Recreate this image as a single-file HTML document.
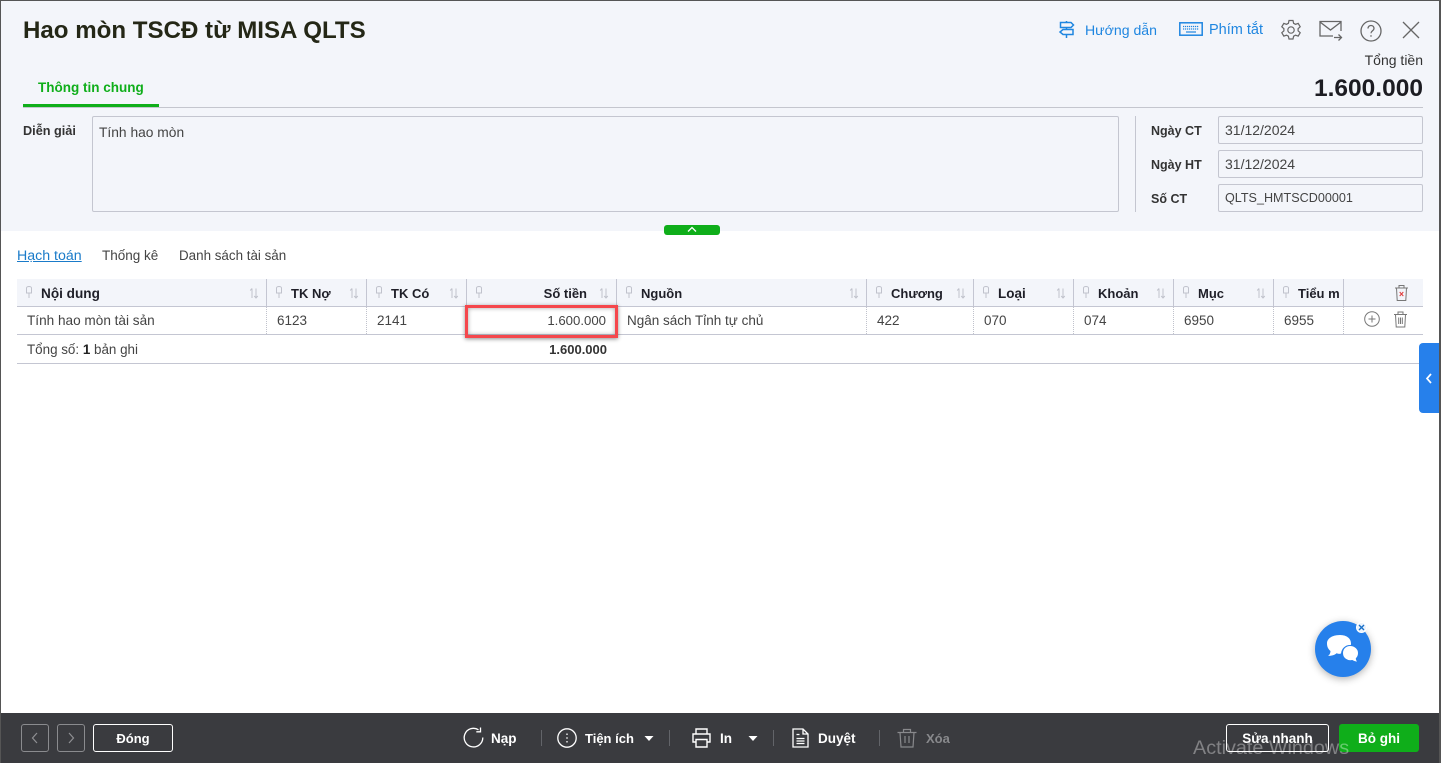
<!DOCTYPE html>
<html lang="vi"><head><meta charset="utf-8"><title>Hao mòn TSCĐ từ MISA QLTS</title>
<style>
html,body{margin:0;padding:0;width:1441px;height:763px;overflow:hidden;background:#fff}
body{position:relative;font-family:"Liberation Sans","Noto Sans CJK JP",sans-serif;font-size:13px;color:#444}
.a,.t,svg{position:absolute}
.t{white-space:nowrap;line-height:18px}
.b{font-weight:bold;color:#1f1f28}
.h{font-weight:bold;color:#1f1f28;top:285px;font-size:13px}
.c{top:312px;color:#444;font-size:13.500px}
.s{top:279px;width:1px;height:27px;background:#c4c6d2}
.d{top:307px;height:27px;border-left:1px dotted #c0c2cc}
.inp{box-sizing:border-box;border:1px solid #c4c6d0;border-radius:2px;background:#f3f5fa;left:1218px;width:205px;height:28px}
.w{color:#fff;font-weight:bold;font-size:13.500px}
.sep{width:1px;height:16px;background:#626469;top:730px}
</style></head><body>
<div class="a" style="left:0;top:0;width:1441px;height:231px;background:#f3f5fa"></div>
<div class="t" style="left:23px;top:15px;font-size:24.100px;line-height:32px;font-weight:bold;color:#242716">Hao mòn TSCĐ từ MISA QLTS</div>

<svg style="left:1057px;top:20px" width="20" height="20" viewBox="0 0 20 20" fill="none" stroke="#1f86e0" stroke-width="1.500"><path d="M3.500 2.500H14L16.500 5 14 7.500H3.500zM16 9.500H6L3 12l3 2.500H16zM9.500 7.500v2M9.500 14.500V18M9.500 1V2.500"/></svg>
<div class="t" style="left:1085px;top:21px;color:#1f86e0;font-size:14.100px">Hướng dẫn</div>
<svg style="left:1179px;top:22px" width="24" height="15" viewBox="0 0 24 15" fill="none" stroke="#1f86e0"><rect x=".8" y=".8" width="22.400" height="12.400" stroke-width="1.500"/><path d="M4 4.500h16M4 7h16" stroke-width="1.200" stroke-dasharray="1.200 .8"/><path d="M7 10h10" stroke-width="1.200"/></svg>
<div class="t" style="left:1209px;top:21px;color:#1f86e0;font-size:14.500px">Phím tắt</div>
<svg style="left:1280px;top:19px" width="22" height="22" viewBox="0 0 22 22" fill="none" stroke="#666" stroke-width="1.200"><path d="M9 1.500h4l.6 2.800 1.900 1 2.700-.9 2 3.400-2.100 1.900v2.100l2.100 1.900-2 3.400-2.700-.9-1.900 1-.6 2.800H9l-.6-2.800-1.900-1-2.700.9-2-3.400 2.100-1.900V9.700L1.800 7.800l2-3.400 2.700.9 1.900-1z"/><circle cx="11" cy="11" r="3.200"/></svg>
<svg style="left:1319px;top:20px" width="24" height="22" viewBox="0 0 24 22" fill="none" stroke="#666" stroke-width="1.300"><path d="M14 16H1V1.500h21V11M1 2l10.500 8L22 2M15 17.500h7.500M19.500 14.500l3 3-3 3"/></svg>
<svg style="left:1360px;top:20px" width="22" height="22" viewBox="0 0 22 22" fill="none" stroke="#666" stroke-width="1.300"><circle cx="11" cy="11" r="10"/><path d="M8 8.500c0-4 6-4 6 0 0 2.200-3 2.300-3 4.700"/><path d="M11 15.200v1.500"/></svg>
<svg style="left:1402px;top:21px" width="18" height="18" viewBox="0 0 18 18" stroke="#666" stroke-width="1.300"><path d="M1 1l16 16M17 1L1 17"/></svg>

<div class="t" style="right:18px;top:51px;font-size:14px;color:#333">Tổng tiền</div>
<div class="t" style="right:18px;top:74px;font-size:24.500px;line-height:30px;font-weight:bold;color:#1c1c22">1.600.000</div>

<div class="t" style="left:38px;top:79px;color:#0fae1a;font-weight:bold;font-size:13.500px">Thông tin chung</div>
<div class="a" style="left:23px;top:107px;width:1400px;height:1px;background:#c4c6ce"></div>
<div class="a" style="left:23px;top:104px;width:136px;height:3px;background:#0fae1a"></div>

<div class="t b" style="left:23px;top:122px;font-size:12.700px;color:#333">Diễn giải</div>
<div class="a" style="box-sizing:border-box;left:92px;top:116px;width:1027px;height:96px;border:1px solid #c4c6d0;border-radius:2px"></div>
<div class="t" style="left:99px;top:124px;font-size:13.800px">Tính hao mòn</div>
<div class="a" style="left:1135px;top:116px;width:1px;height:96px;background:#c4c6d0"></div>
<div class="t b" style="left:1151px;top:122px;font-size:12.500px;color:#333">Ngày CT</div>
<div class="t b" style="left:1151px;top:156px;font-size:12.500px;color:#333">Ngày HT</div>
<div class="t b" style="left:1151px;top:190px;font-size:12.500px;color:#333">Số CT</div>
<div class="a inp" style="top:116px"></div><div class="a inp" style="top:150px"></div><div class="a inp" style="top:184px"></div>
<div class="t" style="left:1225px;top:121px;font-size:14px">31/12/2024</div>
<div class="t" style="left:1225px;top:155px;font-size:14px">31/12/2024</div>
<div class="t" style="left:1225px;top:189px;font-size:12.600px">QLTS_HMTSCD00001</div>

<div class="a" style="left:664px;top:225px;width:56px;height:10px;border-radius:3px;background:#0fae1a"></div>
<svg style="left:687px;top:226px" width="10" height="7" viewBox="0 0 10 7" fill="none" stroke="#fff" stroke-width="1.300"><path d="M1 5.500l4-4 4 4"/></svg>

<div class="t" style="left:17px;top:247px;color:#1a7bc9;text-decoration:underline;font-size:14.200px">Hạch toán</div>
<div class="t" style="left:102px;top:247px;font-size:13.500px">Thống kê</div>
<div class="t" style="left:179px;top:247px;font-size:13.400px">Danh sách tài sản</div>

<div class="a" style="left:17px;top:279px;width:1406px;height:27px;background:#f3f5fa"></div>
<div class="a" style="left:17px;top:306px;width:1406px;height:1px;background:#c4c6d2"></div>
<div class="a" style="left:17px;top:334px;width:1406px;height:1px;background:#c4c6d2"></div>
<div class="a" style="left:17px;top:363px;width:1406px;height:1px;background:#c4c6d2"></div>

<div class="a s" style="left:266px"></div><div class="a s" style="left:366px"></div><div class="a s" style="left:466px"></div><div class="a s" style="left:616px"></div><div class="a s" style="left:866px"></div><div class="a s" style="left:973px"></div><div class="a s" style="left:1073px"></div><div class="a s" style="left:1173px"></div><div class="a s" style="left:1273px"></div><div class="a s" style="left:1343px"></div>
<div class="a d" style="left:266px"></div><div class="a d" style="left:366px"></div><div class="a d" style="left:866px"></div><div class="a d" style="left:973px"></div><div class="a d" style="left:1073px"></div><div class="a d" style="left:1173px"></div><div class="a d" style="left:1273px"></div><div class="a d" style="left:1343px"></div>

<svg class="a" style="left:0;top:279px" width="1441" height="27" fill="none" stroke="#c0c2cc" stroke-width="1">
<defs><g id="p"><path d="M-2.500 9a2.500 1.500 0 0 1 5 0v5h-5zM0 14v5"/></g>
<g id="o"><path d="M-2 19V9.500M-3.800 11.500L-2 9.500M2 9.500V19M.2 17L2 19l1.800-2"/></g></defs>
<use href="#p" x="29"/><use href="#p" x="279"/><use href="#p" x="379"/><use href="#p" x="479"/><use href="#p" x="629"/><use href="#p" x="879"/><use href="#p" x="986"/><use href="#p" x="1086"/><use href="#p" x="1186"/><use href="#p" x="1286"/>
<use href="#o" x="254"/><use href="#o" x="354"/><use href="#o" x="454"/><use href="#o" x="604"/><use href="#o" x="854"/><use href="#o" x="961"/><use href="#o" x="1061"/><use href="#o" x="1161"/><use href="#o" x="1261"/>
</svg>

<div class="t h" style="left:41px;font-size:13.600px">Nội dung</div>
<div class="t h" style="left:291px">TK Nợ</div>
<div class="t h" style="left:391px">TK Có</div>
<div class="t h" style="right:854px">Số tiền</div>
<div class="t h" style="left:641px">Nguồn</div>
<div class="t h" style="left:891px">Chương</div>
<div class="t h" style="left:998px;font-size:13.500px">Loại</div>
<div class="t h" style="left:1098px">Khoản</div>
<div class="t h" style="left:1198px">Mục</div>
<div class="a" style="left:1298px;top:285px;width:42px;height:18px;overflow:hidden"><div class="t h" style="left:0;top:0">Tiểu mục</div></div>

<div class="t c" style="left:27px;font-size:13.600px">Tính hao mòn tài sản</div>
<div class="t c" style="left:277px">6123</div>
<div class="t c" style="left:377px">2141</div>
<div class="t c" style="right:835px;font-size:13.200px">1.600.000</div>
<div class="t c" style="left:627px">Ngân sách Tỉnh tự chủ</div>
<div class="t c" style="left:877px">422</div>
<div class="t c" style="left:984px">070</div>
<div class="t c" style="left:1084px">074</div>
<div class="t c" style="left:1184px">6950</div>
<div class="t c" style="left:1284px">6955</div>

<svg style="left:1394px;top:284px" width="15" height="18" viewBox="0 0 15 18" fill="none" stroke="#777" stroke-width="1"><path d="M1 4h13M5 4V1.500h5V4M2.500 4l.7 12.500h8.600L12.500 4"/><path d="M5.700 8l3.600 4M9.300 8l-3.600 4" stroke="#e03a3a"/></svg>
<svg style="left:1364px;top:311px" width="16" height="16" viewBox="0 0 16 16" fill="none" stroke="#777" stroke-width="1"><circle cx="8" cy="8" r="7.300"/><path d="M4.500 8h7M8 4.500v7"/></svg>
<svg style="left:1393px;top:311px" width="15" height="17" viewBox="0 0 15 17" fill="none" stroke="#777" stroke-width="1"><path d="M1 3.500h13M5 3.500V1h5v2.500M2.500 3.500l.7 12.500h8.600l.7-12.500M5.700 6.500v6.500M7.500 6.500v6.500M9.300 6.500v6.500"/></svg>

<div class="a" style="box-sizing:border-box;left:465px;top:305px;width:153px;height:33px;border:3px solid #f5474c;box-shadow:0 1px 4px rgba(0,0,0,.45),inset 0 0 5px rgba(0,0,0,.35)"></div>

<div class="t" style="left:27px;top:341px;font-size:13.400px">Tổng số: <b style="color:#222">1</b> bản ghi</div>
<div class="t b" style="right:834px;top:341px;color:#333">1.600.000</div>

<div class="a" style="left:1419px;top:343px;width:21px;height:70px;background:#2680eb;border-radius:4px 0 0 4px"></div>
<svg style="left:1425px;top:373px" width="8" height="11" viewBox="0 0 8 11" fill="none" stroke="#fff" stroke-width="1.700"><path d="M6 1L2 5.500 6 10"/></svg>

<div class="a" style="left:1315px;top:621px;width:56px;height:56px;border-radius:50%;background:#2680eb;box-shadow:0 2px 8px rgba(0,0,0,.3)"></div>
<svg style="left:1326px;top:633px" width="34" height="32" viewBox="0 0 34 32" fill="#fff"><path d="M14 2c6 0 11 3 11 8.500 0 1-.2 1.500-.3 2-4-1-9 2-9.700 8-1.500.5-3 .4-4.500-.2C9 22 5.500 23 2 23c1.500-1 2.500-3 2.500-5C2 16 1 13.500 1 10.500 1 5 7 2 14 2z"/><path d="M24 12.500c5 0 8.500 3.500 8.500 7.500 0 2.500-1 4.300-2.200 5.500 0 1.500.7 2.500 2 3.500-2.500 0-4.500-.6-6-1.500-5 1-9.800-2-9.800-7.500 0-4.500 3.500-7.500 7.500-7.500z" stroke="#2680eb" stroke-width="1"/></svg>
<div class="a" style="box-sizing:border-box;left:1356px;top:622px;width:11px;height:11px;border-radius:50%;background:#eaf2fc;border:1px solid #fff"></div>
<svg style="left:1358px;top:624px" width="7" height="7" viewBox="0 0 7 7" stroke="#1a70c8" stroke-width="1.400"><path d="M1 1l5 5M6 1L1 6"/></svg>

<div class="a" style="left:0;top:713px;width:1441px;height:50px;background:#3a3b3f"></div>
<div class="a" style="left:0;top:0;width:1441px;height:1px;background:#555"></div>
<div class="a" style="left:0;top:0;width:1px;height:763px;background:#555"></div>
<div class="a" style="left:1439px;top:0;width:2px;height:763px;background:#555"></div>

<div class="a" style="box-sizing:border-box;left:21px;top:724px;width:28px;height:28px;border:1px solid #8a8b8e;border-radius:3px"></div>
<svg style="left:31px;top:732px" width="8" height="12" viewBox="0 0 8 12" fill="none" stroke="#8f9093" stroke-width="1.200"><path d="M6 1L1.500 6 6 11"/></svg>
<div class="a" style="box-sizing:border-box;left:57px;top:724px;width:28px;height:28px;border:1px solid #8a8b8e;border-radius:3px"></div>
<svg style="left:67px;top:732px" width="8" height="12" viewBox="0 0 8 12" fill="none" stroke="#8f9093" stroke-width="1.200"><path d="M2 1l4.500 5L2 11"/></svg>
<div class="a" style="box-sizing:border-box;left:93px;top:724px;width:80px;height:28px;border:1px solid #fff;border-radius:3px"></div>
<div class="t w" style="left:93px;width:80px;text-align:center;top:730px;font-size:13px">Đóng</div>

<svg style="left:463px;top:727px" width="21" height="21" viewBox="0 0 21 21" fill="none" stroke="#fff" stroke-width="1.300"><path d="M15.500 2.800A9.300 9.300 0 1 0 19.800 10.500"/><path d="M16.500 .5v4.300h-4.200" transform="translate(1 0)"/></svg>
<div class="t w" style="left:491px;top:730px">Nạp</div>
<div class="a sep" style="left:541px"></div>
<svg style="left:557px;top:728px" width="20" height="20" viewBox="0 0 20 20" fill="none" stroke="#fff" stroke-width="1.300"><circle cx="10" cy="10" r="9.200"/><path d="M10 5.500v1.500M10 9.200v1.500M10 13v1.500"/></svg>
<div class="t w" style="left:585px;top:730px;font-size:13px">Tiện ích</div>
<svg style="left:644px;top:736px" width="10" height="5" viewBox="0 0 10 5" fill="#fff"><path d="M.5 0h9L5 5z"/></svg>
<div class="a sep" style="left:669px"></div>
<svg style="left:692px;top:728px" width="19" height="20" viewBox="0 0 19 20" fill="none" stroke="#fff" stroke-width="1.400"><path d="M4 6V1h11v5M4 14H1V6h17v8h-3M4 11.500h11V19H4z"/></svg>
<div class="t w" style="left:720px;top:730px">In</div>
<svg style="left:748px;top:736px" width="10" height="5" viewBox="0 0 10 5" fill="#fff"><path d="M.5 0h9L5 5z"/></svg>
<div class="a sep" style="left:773px"></div>
<svg style="left:792px;top:728px" width="17" height="20" viewBox="0 0 17 20" fill="none" stroke="#fff" stroke-width="1.300"><path d="M1 1h10l5 5v13H1zM11 1v5h5M4.500 6.500h3M4.500 10.500h8M4.500 13h8M4.500 15.500h8"/></svg>
<div class="t w" style="left:818px;top:730px">Duyệt</div>
<div class="a sep" style="left:879px"></div>
<svg style="left:897px;top:728px" width="20" height="20" viewBox="0 0 20 20" fill="none" stroke="#88898c" stroke-width="1.200"><path d="M.5 4.500h19M6.500 4.500V1.500h7v3M3 4.500l1 14.500h12l1-14.500M8 8v7M12 8v7"/></svg>
<div class="t w" style="left:926px;top:730px;color:#88898c;font-size:13px">Xóa</div>

<div class="a" style="box-sizing:border-box;left:1226px;top:724px;width:103px;height:28px;border:1px solid #fff;border-radius:3px"></div>
<div class="t w" style="left:1226px;width:103px;text-align:center;top:730px">Sửa nhanh</div>
<div class="a" style="left:1339px;top:724px;width:80px;height:28px;background:#0fae1a;border-radius:3px"></div>
<div class="t w" style="left:1339px;width:80px;text-align:center;top:730px">Bỏ ghi</div>
<div class="t" style="left:1193px;top:737px;font-size:19.800px;line-height:22px;color:rgba(255,255,255,.36)">Activate Windows</div>
</body></html>
